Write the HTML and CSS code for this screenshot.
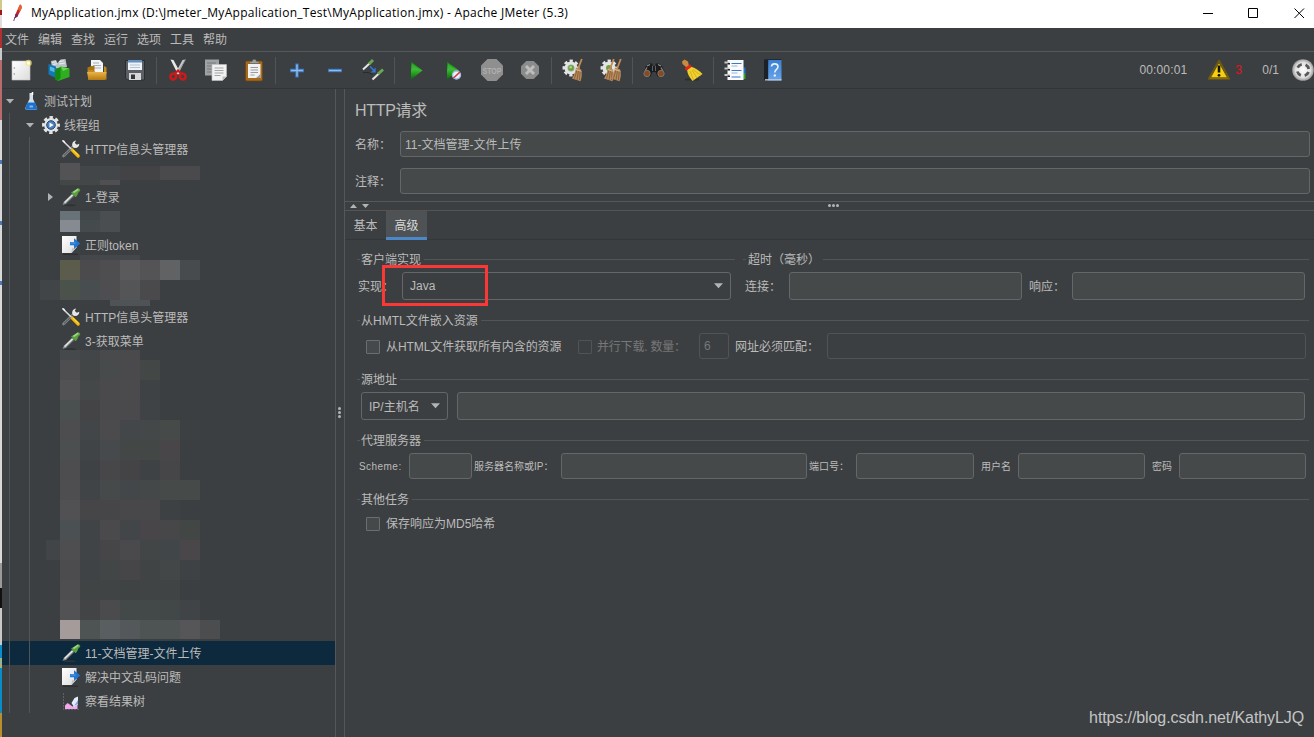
FILE: index.html
```html
<!DOCTYPE html>
<html lang="zh-CN">
<head>
    <meta charset="UTF-8">
    <meta name="viewport" content="width=device-width, initial-scale=1.0">
    <title>MyApplication.jmx - Apache JMeter (5.3)</title>
    <link rel="stylesheet" href="styles.css">
</head>
<body>
    <!-- Shared icons -->
    <svg width="0" height="0" class="defs">
        <defs>
            <linearGradient id="green" x1="0" y1="0" x2="0" y2="1"><stop offset="0" stop-color="#0b7a10"/><stop offset=".5" stop-color="#35b52c"/><stop offset="1" stop-color="#056a08"/></linearGradient>
            <linearGradient id="gold" x1="0" y1="0" x2="0" y2="1"><stop offset="0" stop-color="#e9b548"/><stop offset="1" stop-color="#b47a10"/></linearGradient>
            <linearGradient id="paper" x1="0" y1="0" x2="1" y2="1"><stop offset="0" stop-color="#ffffff"/><stop offset="1" stop-color="#dcdcdc"/></linearGradient>
            <linearGradient id="book" x1="0" y1="0" x2="0" y2="1"><stop offset="0" stop-color="#3a7fd0"/><stop offset="1" stop-color="#69a6ea"/></linearGradient>
            <radialGradient id="ball"><stop offset="0" stop-color="#ffffff"/><stop offset=".7" stop-color="#e0e0e0"/><stop offset="1" stop-color="#9a9a9a"/></radialGradient>
        </defs>
        <symbol id="dropper" viewBox="0 0 20 20">
            <ellipse cx="9" cy="18.3" rx="6" ry="1" fill="#2f3234"/>
            <path d="M1.5 17.8 3 14.5 11 6.8l2.3 2.3-8.2 7.8z" fill="#8d9194"/>
            <path d="M3.6 15.6 11.6 7.9" stroke="#f4f4f4" stroke-width="1.3"/>
            <path d="M5.4 16.6 13 9.3" stroke="#4d5052" stroke-width=".8"/>
            <path d="M10 5.6l4.6 4.7 1.4-1.6 1.4-3.2 1.8-1.8c.4-1.2-1.3-2.8-2.6-2.3L13.4 3.5z" fill="#5a9e42"/>
            <path d="M12.5 5.5 17.3 2.1" stroke="#9fd885" stroke-width="1.7"/>
        </symbol>
        <symbol id="tools" viewBox="0 0 20 20">
            <path d="M2.500 17 12 7.800" stroke="#85888a" stroke-width="2.600" stroke-linecap="round"/>
            <path d="M2.800 16.700 12 7.800" stroke="#4a4d4f" stroke-width="1"/>
            <path d="M11.500 7.500c-1-3 .5-5.500 3.600-6l-1.300 2.600 2 1.700 2.500-1c.2 3-2.600 4.800-5.200 4z" fill="#e6e7e7"/>
            <path d="M1.500 1.500 10.500 10.300" stroke="#dcdcdc" stroke-width="1.500"/>
            <path d="M1 1.200l2.200.4 1.400 2.600-1-.2z" fill="#fff"/>
            <path d="M11.500 11.300 17.200 17" stroke="#f2b705" stroke-width="3.200" stroke-linecap="round"/>
            <path d="M11.800 11 17.500 16.500" stroke="#ffe160" stroke-width="1"/>
        </symbol>
        <symbol id="post" viewBox="0 0 20 20">
            <path d="M2 19.200h15" stroke="#2c2e30" stroke-width="1.400"/>
            <path d="M1 1h14.500v11.500L10.500 18H1z" fill="url(#paper)"/>
            <path d="M15.500 12.500 10.500 18l.4-4.500z" fill="#bfc1c3"/>
            <path d="M9 7h4V3.200l6.200 5.300-6.200 5.400v-3.700H9z" fill="#2275d2"/>
            <path d="M9.500 8h5" stroke="#5fa6ee"/>
        </symbol>
        <symbol id="gear" viewBox="0 0 24 24">
            <circle cx="12" cy="12" r="8.700" fill="#e4e4e4"/>
            <circle cx="12" cy="12" r="9.500" fill="none" stroke="#e4e4e4" stroke-width="3.600" stroke-dasharray="4.300 3.160" stroke-dashoffset="2.150"/>
        </symbol>
        <symbol id="sweeper" viewBox="0 0 12 24">
            <path d="M10.800 1 7 11" stroke="#c58a52" stroke-width="1.800"/>
            <path d="M5 9.500l5.200 2c1 4 .8 8-.7 11.700L1 20.500C3.500 17 4.300 13 5 9.500z" fill="#b98a5d"/>
            <path d="M6 12 3.500 20.500M7.500 12.500 6 22M9.200 12.500 8.500 22" stroke="#7e5832" stroke-width=".8"/>
            <path d="M4.800 11.500l5.500 1.800" stroke="#e3bd8d" stroke-width="1"/>
        </symbol>
    </svg>

    <div class="desktop-edge"></div>

    <div class="window">
        <header class="title-bar">
            <svg class="app-icon" width="10" height="18" viewBox="0 0 10 18"><path d="M7 .5c1.500.5 2 2 1.500 4L4.500 12.500 1.500 14.500 2.500 10z" fill="#c8202f"/><path d="M7 .5c1.500.5 2 2 1.500 4L7 7.500 4.800 5z" fill="#e8622a"/><path d="M2.500 10 1.500 14.500 4.500 12.500 5 10z" fill="#7d2160"/><path d="M2 13 .7 17" stroke="#6b4a6e"/></svg>
            <span class="caption">MyApplication.jmx (D:\Jmeter_MyAppalication_Test\MyApplication.jmx) - Apache JMeter (5.3)</span>
            <svg class="controls" width="104" height="12" viewBox="0 0 104 12" fill="none" stroke="#000"><path d="M0 6.500h10M45.500 1.500h9v9h-9zM91.500 1.500l9.500 9.500M101 1.500 91.500 11"/></svg>
        </header>

        <nav class="menu">
            <span>文件</span><span>编辑</span><span>查找</span><span>运行</span><span>选项</span><span>工具</span><span>帮助</span>
        </nav>

        <div class="toolbar">
            <!-- new -->
            <div class="tool"><svg viewBox="0 0 24 24"><path d="M3 3h18v19H3z" fill="url(#paper)" stroke="#c4c4c4" stroke-width=".6"/><circle cx="5.300" cy="10" r=".7" fill="#888"/><circle cx="5.300" cy="16" r=".7" fill="#888"/><circle cx="19.500" cy="5" r="3.300" fill="#f4e77a" opacity=".7"/><circle cx="19.500" cy="5" r="1.700" fill="#fffef0"/></svg></div>
            <!-- templates -->
            <div class="tool"><svg viewBox="0 0 24 24"><path d="M4 3l5-1 1.500 3 3-3.500 5-.5 1.500 8-15 2z" fill="#b9c3c8"/><path d="M5 4.500l4-.8M12 3.700l5-1M6 6.500l4-.8M12 6l6-1" stroke="#e9eef0"/><path d="M1.500 6 9 8.500V20l-7.500-3.500z" fill="#1378b8"/><path d="M3 8.500l4.500 1.700v4L3 12.500z" fill="#58b6e6"/><path d="M8 12l6-3.500 8.500 2v8.500L11 23l-3-2z" fill="#2fae22"/><path d="M8 12l5.500-3v11L11 23l-3-2z" fill="#148a10"/><path d="M14 9l8 1.500-6 2.500z" fill="#6ad84a"/></svg></div>
            <!-- open -->
            <div class="tool"><svg viewBox="0 0 24 24"><path d="M6 2h9l3 3v9H6z" fill="#f3f4f5"/><path d="M8 5h6M8 7.500h8M8 10h8" stroke="#a9adb0"/><path d="M2.500 9.500l4-1.500h3v7H2.500z" fill="#a87416"/><path d="M3 12h5l2 2h9V8l2.500 1.500V21.500H3z" fill="#c38a1c"/><path d="M2 14h19.500l-1.500 8H3.500z" fill="url(#gold)"/></svg></div>
            <!-- save -->
            <div class="tool"><svg viewBox="0 0 24 24"><path d="M2.500 2.500h19v19.500H4.500l-2-2z" fill="#5c6066" stroke="#2b2d30"/><path d="M5 2.500h14v9.500H5z" fill="#eef3f8"/><path d="M5 2.500h14v2H5z" fill="#5c90cc"/><path d="M7 7h10M7 9.500h10" stroke="#b7c3cf"/><path d="M6 15h12v7H6z" fill="#d6d7d9"/><path d="M8 16.500h4v4.500H8z" fill="#33363a"/></svg></div>
            <div class="sep"></div>
            <!-- cut -->
            <div class="tool"><svg viewBox="0 0 24 24"><path d="M4.500 1.500 7.500 2l7 13-2.500 1.500z" fill="#e9e9e9"/><path d="M19.500 1.500 16.500 2l-7 13 2.500 1.500z" fill="#c7c9ca"/><path d="M19.500 1.500 12 14" stroke="#8b8e90" stroke-width=".8"/><path d="M9 15.500l3-3 3 3" fill="none" stroke="#d01818" stroke-width="2"/><g fill="none" stroke="#d01818" stroke-width="2.600"><ellipse cx="7.300" cy="18.500" rx="2.800" ry="3" transform="rotate(30 7.300 18.500)"/><ellipse cx="16.700" cy="18.500" rx="2.800" ry="3" transform="rotate(-30 16.700 18.500)"/></g></svg></div>
            <!-- copy -->
            <div class="tool"><svg viewBox="0 0 24 24"><path d="M1 1.500h14v16H1z" fill="#9fa2a4"/><path d="M3 5h9M3 8h6M3 11h6M3 14h6" stroke="#77797b"/><path d="M8 6.500h14.500v12l-4 4H8z" fill="#f2f2f2" stroke="#c2c2c2" stroke-width=".6"/><path d="M10.500 10h9M10.500 12.500h9M10.500 15h9M10.500 17.500h6" stroke="#a2a5a7"/><path d="M22.500 18.500l-4 4v-4z" fill="#bdbdbd"/></svg></div>
            <!-- paste -->
            <div class="tool"><svg viewBox="0 0 24 24"><rect x="3.500" y="3" width="17" height="20" rx="1.500" fill="#a9691a" stroke="#6e430e" stroke-width=".7"/><path d="M6 6h12.500v14H6z" fill="#f2f2f2"/><path d="M8.500 9.500h7.500M8.500 12h7.500M8.500 14.500h7.500M8.500 17h4" stroke="#999c9e"/><path d="M18.500 16v4H14z" fill="#9b9b9b"/><path d="M7.500 5.500V3.500h2.500l1-2h2.500l1 2H17v2z" fill="#9da19a" stroke="#5b5e59" stroke-width=".6"/></svg></div>
            <div class="sep"></div>
            <!-- add / remove / toggle -->
            <div class="tool"><svg viewBox="0 0 24 24"><path d="M12 5.500v14M5 12.500h14" stroke="#3b77bd" stroke-width="3.400"/><path d="M12 6.500v12M6 12.500h12" stroke="#8dbdf0" stroke-width="1.400"/></svg></div>
            <div class="tool"><svg viewBox="0 0 24 24"><path d="M5 12.500h14" stroke="#3b77bd" stroke-width="3.400"/><path d="M6 12.500h12" stroke="#8dbdf0" stroke-width="1.400"/></svg></div>
            <div class="tool"><svg viewBox="0 0 24 24"><path d="M2 11.500 8.500 5.500" stroke="#e5e5e5" stroke-width="2"/><path d="M8 6 12 2" stroke="#69a851" stroke-width="3"/><path d="M11.500 21.500 18 15.500" stroke="#e5e5e5" stroke-width="2"/><path d="M17 16 22 11.500" stroke="#69a851" stroke-width="3"/><path d="M2 14.500h5l5 2" stroke="#202224" stroke-width=".7" fill="none"/><path d="M9 8.500l4.500 4.500" stroke="#3279d6" stroke-width="1.600"/><path d="M14.700 9.500v5h-5z" fill="#3279d6"/></svg></div>
            <div class="sep"></div>
            <!-- start / start no pauses -->
            <div class="tool"><svg viewBox="0 0 24 24"><path d="M7 3.500 18.500 12.500 7 21.500z" fill="url(#green)"/><path d="M8 5.500 16 12H8z" fill="#4cc046" opacity=".55"/></svg></div>
            <div class="tool"><svg viewBox="0 0 24 24"><path d="M5 3.500 17 12.500 5 21.500z" fill="url(#green)"/><path d="M6 5.500 14 12H6z" fill="#4cc046" opacity=".55"/><circle cx="14.500" cy="17" r="4" fill="#e9f1fb" stroke="#9fbfe8" stroke-width="1.400"/><path d="M11.500 20 18 14" stroke="#d43c3c" stroke-width="1.700"/></svg></div>
            <!-- stop / shutdown -->
            <div class="tool"><svg viewBox="0 0 24 24"><path d="M7.500 1h9L23 7.500v9L16.500 23h-9L1 16.500v-9z" fill="#8f8f8f"/><text x="12" y="15.500" text-anchor="middle" class="stop-text" textLength="19" lengthAdjust="spacingAndGlyphs">STOP</text></svg></div>
            <div class="tool"><svg viewBox="0 0 24 24"><path d="M8.300 3h7.400l5.300 5.300v7.400L15.700 21H8.300L3 15.700V8.300z" fill="#8b8b8b"/><path d="M8 8l8 8M16 8l-8 8" stroke="#bdbdbd" stroke-width="3"/></svg></div>
            <div class="sep"></div>
            <!-- clear / clear all -->
            <div class="tool"><svg viewBox="0 0 24 24"><use href="#gear" x="1" y="1" width="18" height="18"/><circle cx="10" cy="10" r="3.500" fill="#9fa5a0"/><circle cx="10" cy="10" r="2.700" fill="#63a53a"/><circle cx="9.700" cy="9.300" r="1.300" fill="#a5dd6c"/><use href="#sweeper" x="10" y="0" width="12" height="24"/></svg></div>
            <div class="tool"><svg viewBox="0 0 24 24"><use href="#gear" x="1" y="1" width="18" height="18"/><circle cx="10" cy="10" r="3" fill="#63a53a"/><use href="#sweeper" x="4" y="0" width="12" height="24"/><use href="#sweeper" x="11" y="0" width="12" height="24"/></svg></div>
            <div class="sep"></div>
            <!-- search / reset search -->
            <div class="tool"><svg viewBox="0 0 24 24"><path d="M4 8l3-2.500h3.500V8h3V5.500H17L20 8l2.500 6-2 4-5 .5-2-4.500h-3l-2 4.500-5-.5-2-4z" fill="#1b1c1d"/><path d="M5 8l3-1.500M19 8l-3-1.500M3 13l2-3.500M21 13l-2-3.500" stroke="#8d9092" stroke-width="1.200"/><path d="M10.500 8v5M13.500 8v5" stroke="#5f6264"/><circle cx="5" cy="15.500" r="3.200" fill="#8a4a1d" stroke="#777a7b" stroke-width=".9"/><circle cx="19" cy="15.500" r="3.200" fill="#8a4a1d" stroke="#777a7b" stroke-width=".9"/></svg></div>
            <div class="tool"><svg viewBox="0 0 24 24"><path d="M5 21.500h14" stroke="#2d2f31" stroke-width="2"/><path d="M2 3.500 4.500 1.500 8 3.500 9 8 6.500 9.500 2.500 6z" fill="#c98a3e"/><path d="M10.500 8.500c5 1.500 8.500 4 12 7.500L12.500 23C9.500 19.500 7.500 16 7 11.500z" fill="#f0d02c"/><path d="M10 13l3.500 9M12 12l5 8M13 11.500l8 6" stroke="#cfa91a" stroke-width=".8"/><path d="M5.500 11.500 11 7.500" stroke="#d8271c" stroke-width="3"/></svg></div>
            <div class="sep"></div>
            <!-- function helper / help -->
            <div class="tool"><svg viewBox="0 0 24 24"><path d="M19 9.500h3.500V16H19z" fill="#2a6fd0"/><path d="M19 15.500h3.500V21H19z" fill="#2fa92b"/><path d="M4.500 2h16v20h-16z" fill="#fafafa"/><path d="M8.500 5.500h10M8.500 12.500h10M8.500 19h9" stroke="#3c78c8" stroke-width="1.100"/><path d="M8.500 8h6M8.500 15h6" stroke="#92b6e4"/><path d="M1.500 4.500h5M1.500 10.500h5M1.500 17h5" stroke="#c9c9c9" stroke-width="1.800"/><path d="M4.500 5.800h2.500M4.500 11.800h2.500M4.500 18.300h2.500" stroke="#222" stroke-width="1.400"/></svg></div>
            <div class="tool"><svg viewBox="0 0 24 24"><path d="M3.500 2h17v20.500h-17z" fill="url(#book)"/><path d="M3 2h4.200v20.500H3z" fill="#1c2127"/><path d="M3.500 1.500h17" stroke="#222a33"/><path d="M4 21.800h16.500" stroke="#b9cbe0" stroke-width="1.300"/><path d="M10.500 8.500c.2-3.500 6.500-3.500 6.500.3 0 2.500-3.200 2.600-3.200 5.700" fill="none" stroke="#e6f0fb" stroke-width="1.600"/><circle cx="13.800" cy="17.500" r="1.200" fill="#e6f0fb"/></svg></div>

            <div class="status">
                <span class="elapsed">00:00:01</span>
                <svg width="24" height="22" viewBox="0 0 24 22"><path d="M12 1.500 22.500 20H1.500z" fill="#f7cf10" stroke="#6d5a14" stroke-width="1.600" stroke-linejoin="round"/><path d="M12 3.500 20.500 18.700H3.500z" fill="none" stroke="#3a320c" stroke-width=".7"/><path d="M12 6.500v7" stroke="#111" stroke-width="2.600"/><circle cx="12" cy="16.300" r="1.400" fill="#111"/></svg>
                <span class="errors">3</span>
                <span class="threads">0/1</span>
                <svg class="run-state" width="22" height="22" viewBox="0 0 22 22"><circle cx="11" cy="11" r="10.800" fill="url(#ball)"/><circle cx="11" cy="11" r="5.800" fill="none" stroke="#55585a" stroke-width="2.800" stroke-dasharray="5.100 4" stroke-dashoffset="-2"/></svg>
            </div>
        </div>

        <main class="workspace">
            <aside class="tree">
                <div class="guide guide-root"></div>
                <div class="guide guide-group"></div>
                <div class="node level-0"><svg class="twisty" viewBox="0 0 10 10"><path d="M1 3h8L5 7.500z"/></svg><svg class="icon" viewBox="0 0 20 20"><path d="M8.500 2h3.500v6l4 8.500c.6 1.500-.3 2.500-1.500 2.500h-8.500C4.800 19 3.900 18 4.500 16.500L8.500 8z" fill="#d2e0ea"/><path d="M6.500 11.500h7.500l2 5c.5 1.400 0 2.300-1.200 2.300H5.900c-1.200 0-1.700-.9-1.200-2.300z" fill="#1d71cc"/><path d="M8.500 15.500h3.500" stroke="#7db9f2" stroke-width="2"/><path d="M11.500 1v3" stroke="#fff" stroke-width="1.500"/></svg><span>测试计划</span></div>
                <div class="node level-1"><svg class="twisty" viewBox="0 0 10 10"><path d="M1 3h8L5 7.500z"/></svg><svg class="icon" viewBox="0 0 20 20"><use href="#gear" x=".5" y=".5" width="19" height="19"/><circle cx="10" cy="10" r="4.300" fill="#4a80c4" stroke="#24466f"/><path d="M8.500 7.500 12.600 10l-4.100 2.500z" fill="#fff"/></svg><span>线程组</span></div>
                <div class="node level-2"><i class="twisty"></i><svg class="icon"><use href="#tools"/></svg><span>HTTP信息头管理器</span></div>
                <div class="node"></div>
                <div class="node level-2"><svg class="twisty" viewBox="0 0 10 10"><path d="M3 1v8l5-4z"/></svg><svg class="icon"><use href="#dropper"/></svg><span>1-登录</span></div>
                <div class="node"></div>
                <div class="node level-2"><i class="twisty"></i><svg class="icon"><use href="#post"/></svg><span>正则token</span></div>
                <div class="node hidden-2"></div>
                <div class="node level-2"><i class="twisty"></i><svg class="icon"><use href="#tools"/></svg><span>HTTP信息头管理器</span></div>
                <div class="node level-2"><i class="twisty"></i><svg class="icon"><use href="#dropper"/></svg><span>3-获取菜单</span></div>
                <div class="node hidden-12"></div>
                <div class="node level-2 selected"><i class="twisty"></i><svg class="icon"><use href="#dropper"/></svg><span>11-文档管理-文件上传</span></div>
                <div class="node level-2"><i class="twisty"></i><svg class="icon"><use href="#post"/></svg><span>解决中文乱码问题</span></div>
                <div class="node level-2"><i class="twisty"></i><svg class="icon" viewBox="0 0 20 20"><path d="M2.500 2v16.500H18" fill="none" stroke="#5f6365" stroke-dasharray="2 1"/><path d="M4 18v-3.500l2.500-2.500 3 2 2 1.500 5-2v4.500z" fill="#f2a8ea"/><path d="M10.500 12l3-5 3.500-1.500v8L13 16z" fill="#e6eefb"/><path d="M13 15l4-2v-4z" fill="#7da3df"/></svg><span>察看结果树</span></div>
                <svg class="mosaic" id="mosaic" width="240" height="648"></svg>
            </aside>

            <div class="splitter"><i></i><i></i><i></i></div>

            <section class="editor">
                <h1>HTTP请求</h1>
                <div class="prop"><label>名称：</label><div class="field"><span>11-文档管理-文件上传</span></div></div>
                <div class="prop"><label>注释：</label><div class="field"></div></div>

                <div class="h-splitter">
                    <svg class="collapse" width="22" height="8" viewBox="0 0 22 8"><path d="M1 6h7L4.500 2zM13 2h7l-3.500 4z" fill="#b4b4b4"/></svg>
                    <div class="dots"><i></i><i></i><i></i></div>
                </div>

                <div class="tabs">
                    <div class="tab">基本</div>
                    <div class="tab active">高级</div>
                </div>

                <div class="settings">
                    <div class="pair">
                        <div class="group client">
                            <div class="group-title">客户端实现</div>
                            <div class="row">
                                <label>实现：</label>
                                <div class="combo">Java<svg viewBox="0 0 10 6"><path d="M0 0h10L5 5.500z"/></svg></div>
                                <div class="highlight"></div>
                            </div>
                        </div>
                        <div class="group timeouts">
                            <div class="group-title">超时（毫秒）</div>
                            <div class="row">
                                <label>连接：</label>
                                <div class="field"></div>
                                <label class="response">响应：</label>
                                <div class="field"></div>
                            </div>
                        </div>
                    </div>

                    <div class="group embedded">
                        <div class="group-title">从HMTL文件嵌入资源</div>
                        <div class="row">
                            <span class="check"></span><label class="retrieve">从HTML文件获取所有内含的资源</label>
                            <span class="check disabled"></span><label class="parallel">并行下载. 数量：</label>
                            <div class="field pool disabled">6</div>
                            <label class="match">网址必须匹配：</label>
                            <div class="field disabled"></div>
                        </div>
                    </div>

                    <div class="group source">
                        <div class="group-title">源地址</div>
                        <div class="row">
                            <div class="combo"><span>IP/主机名</span><svg viewBox="0 0 10 6"><path d="M0 0h10L5 5.500z"/></svg></div>
                            <div class="field"></div>
                        </div>
                    </div>

                    <div class="group proxy">
                        <div class="group-title">代理服务器</div>
                        <div class="row">
                            <label class="scheme">Scheme:</label><div class="field w-scheme"></div>
                            <label class="host">服务器名称或IP：</label><div class="field w-host"></div>
                            <label class="port">端口号：</label><div class="field w-port"></div>
                            <label class="user">用户名</label><div class="field w-user"></div>
                            <label class="pass">密码</label><div class="field w-user"></div>
                        </div>
                    </div>

                    <div class="group other">
                        <div class="group-title">其他任务</div>
                        <div class="row">
                            <span class="check"></span><label class="md5">保存响应为MD5哈希</label>
                        </div>
                    </div>
                </div>
            </section>
        </main>
    </div>

    <div class="watermark">https://blog.csdn.net/KathyLJQ</div>
    <script src="script.js"></script>
</body>
</html>
```

FILE: styles.css
```css
* {
    margin: 0;
    padding: 0;
    box-sizing: border-box;
}

body {
    width: 1314px;
    height: 737px;
    display: flex;
    overflow: hidden;
    position: relative;
    background: #3c3f41;
    color: #bbbbbb;
    font-family: "Liberation Sans", "Noto Sans CJK SC", sans-serif;
    font-size: 12px;
    line-height: 16px;
    white-space: nowrap;
}
.defs {
    position: absolute;
}
/* Sliver of whatever is behind the window */
.desktop-edge {
    width: 2px;
    background: linear-gradient(#cfc98a 0 10px, #a01818 10px 15px, #dedede 15px 28px, #b03030 28px 48px, #c9c9c9 48px 60px, #b86a6c 60px 120px, #d8d8d8 120px 160px, #4a78b8 160px 164px, #d8d8d8 164px 221px, #4a78b8 221px 225px, #d8d8d8 225px 281px, #4a78b8 281px 285px, #d8d8d8 285px 563px, #9a9a9a 563px 588px, #111 588px 608px, #c8c8c8 608px 645px, #0a8cc8 645px 658px, #9db48a 658px 668px, #0a8cc8 668px 713px, #b88f2a 713px);
}
.window {
    flex: 1;
    display: flex;
    flex-direction: column;
}

/* Title bar and menu */
.title-bar {
    height: 28px;
    display: flex;
    align-items: center;
    background: #fff;
    color: #000;
    padding: 0 7px 3px 11px;
}
.app-icon {
    margin-right: 8px;
}
.caption {
    font-family: "Open Sans", "Noto Sans", sans-serif;
    font-size: 12px;
    letter-spacing: 0.28px;
}
.controls {
    margin-left: auto;
}
.menu {
    height: 24px;
    display: flex;
    gap: 9px;
    padding: 4px 0 0 3px;
    border-bottom: 1px solid #555759;
}

/* Toolbar */
.toolbar {
    height: 37px;
    display: flex;
    align-items: center;
    border-bottom: 1px solid #323537;
}
.tool {
    width: 38px;
    height: 36px;
    display: flex;
    align-items: center;
    justify-content: center;
}
.tool svg {
    width: 24px;
    height: 24px;
}
.stop-text {
    font-size: 9px;
    font-weight: bold;
    fill: #b0b0b0;
}
.sep {
    width: 1px;
    height: 27px;
    margin: 0 2px;
    background: #515355;
}
.status {
    flex: 1;
    display: flex;
    align-items: center;
    justify-content: flex-end;
}
.elapsed {
    margin-right: 20px;
    letter-spacing: 0.15px;
}
.errors {
    width: 7px;
    margin: 0 20px 0 4px;
    color: #e0141c;
}
.threads {
    margin-right: 13px;
}

/* Tree */
.workspace {
    flex: 1;
    display: grid;
    grid-template-columns: 333px 10px 1fr;
}
.tree {
    position: relative;
}
.node {
    height: 24px;
    display: flex;
    align-items: center;
}
.node span {
    padding-top: 2px;
}
.level-0 {
    padding-left: 3px;
}
.level-1 {
    padding-left: 23px;
}
.level-2 {
    padding-left: 43px;
}
.level-2 span {
    padding-left: 1px;
}
.twisty {
    width: 10px;
    height: 10px;
    margin-right: 6px;
    fill: #b0b2b3;
}
.icon {
    width: 20px;
    height: 20px;
    margin-right: 3px;
}
.hidden-2 {
    height: 48px;
}
.hidden-12 {
    height: 288px;
}
.selected {
    background: #0d293e;
}
.guide {
    position: absolute;
    width: 1px;
    bottom: 24px;
    background: #515557;
}
.guide-root {
    left: 7px;
    top: 24px;
}
.guide-group {
    left: 27px;
    top: 48px;
}
.mosaic {
    position: absolute;
    left: -2px;
    top: 0;
}

/* Splitters */
.splitter {
    display: flex;
    flex-direction: column;
    align-items: center;
    justify-content: center;
    gap: 1px;
    padding: 0 1px 2px 0;
    border-left: 1px solid #555759;
    border-right: 1px solid #555759;
}
.splitter i,
.dots i {
    width: 3px;
    height: 3px;
    border-radius: 50%;
    background: #b4b4b4;
}
.h-splitter {
    height: 10px;
    margin-top: 7px;
    position: relative;
    display: flex;
    align-items: center;
    border-top: 1px solid #555759;
    border-bottom: 1px solid #555452;
}
.collapse {
    margin-left: 4px;
}
.dots {
    display: flex;
    gap: 1px;
    margin: -1px 0 0 457px;
}

/* Editor */
.editor {
    display: flex;
    flex-direction: column;
}
h1 {
    height: 42px;
    padding: 12px 0 0 10px;
    font-size: 16px;
    font-weight: normal;
    line-height: 20px;
    letter-spacing: -0.3px;
}
.prop {
    display: flex;
    align-items: center;
    padding: 0 4px 0 10px;
}
.prop + .prop {
    margin-top: 11px;
}
.prop label {
    width: 45px;
    padding-top: 2px;
}
.prop .field span,
.source .combo span {
    padding-top: 2px;
}
.field,
.combo {
    height: 26px;
    display: flex;
    align-items: center;
    flex: 1;
    min-width: 0;
    border: 1px solid #646667;
    border-radius: 3px;
    background: #45494a;
    padding: 0 4px;
}
.combo {
    height: 28px;
    justify-content: space-between;
    background: none;
    padding: 0 7px;
}
.combo svg {
    width: 9px;
    height: 6px;
    fill: #b4b4b4;
}
.tabs {
    height: 29px;
    display: flex;
    border-bottom: 1px solid #343638;
}
.tab {
    width: 41px;
    height: 29px;
    padding-top: 7px;
    text-align: center;
}
.tab.active {
    background: #4e5254;
    border-bottom: 3px solid #4a88c7;
    color: #d8d8d8;
}

/* Titled groups */
.settings {
    padding: 9px 5px 0 12px;
}
.group {
    margin-bottom: 10px;
}
.group-title {
    height: 21px;
    display: flex;
    align-items: center;
    margin-bottom: 2px;
}
.group-title::before,
.group-title::after {
    content: "";
    height: 1px;
    background: #515557;
}
.group-title::before {
    width: 3px;
    margin-right: 1px;
}
.group-title::after {
    flex: 1;
    margin-left: 3px;
}
.timeouts .group-title::before {
    margin-right: 2px;
}
.row {
    display: flex;
    align-items: center;
    position: relative;
}
.pair {
    display: flex;
    gap: 8px;
}
.client {
    width: 378px;
}
.client .row {
    padding: 0 4px 0 1px;
}
.client label {
    width: 44px;
    padding-top: 2px;
}
.highlight {
    position: absolute;
    left: 25px;
    top: -7px;
    width: 106px;
    height: 41px;
    border: 3px solid #fb3835;
}
.timeouts {
    flex: 1;
}
.timeouts .row {
    padding: 0 4px 0 2px;
}
.timeouts label {
    width: 44px;
    padding-top: 2px;
}
.timeouts .response {
    width: 43px;
    margin-left: 7px;
}
.timeouts .field {
    height: 28px;
}
.check {
    width: 14px;
    height: 14px;
    margin: 2px 6px 0 0;
    border: 1px solid #6b6d6e;
    border-radius: 1px;
    background: #45494a;
}
.disabled {
    color: #777777;
    background: none;
    border-color: #515456;
}
.check.disabled {
    margin-right: 5px;
}
.embedded .row {
    padding: 0 3px 0 9px;
}
.embedded label {
    padding-top: 2px;
}
.retrieve {
    width: 192px;
    letter-spacing: -0.08px;
}
.parallel {
    width: 102px;
    color: #777777;
    letter-spacing: -0.2px;
}
.pool {
    flex: none;
    width: 30px;
}
.match {
    width: 92px;
    margin-left: 6px;
}
.source .row {
    padding: 0 4px;
}
.source .combo {
    flex: none;
    width: 87px;
    margin-right: 9px;
}
.source .field {
    height: 28px;
}
.proxy .row {
    padding-left: 2px;
    font-size: 10px;
}
.proxy .field {
    flex: none;
}
.proxy label {
    padding-top: 1px;
}
.scheme {
    width: 50px;
    letter-spacing: 0.45px;
}
.host {
    width: 87px;
    margin-left: 2px;
}
.port {
    width: 47px;
    margin-left: 2px;
}
.user {
    width: 37px;
    margin-left: 7px;
}
.pass {
    width: 27px;
    margin-left: 7px;
}
.w-scheme {
    width: 63px;
}
.w-host {
    width: 246px;
}
.w-port {
    width: 118px;
}
.w-user {
    width: 127px;
}
.other .row {
    height: 24px;
    padding-left: 9px;
}
.other .check {
    margin-top: 0;
}

.watermark {
    position: absolute;
    right: 10px;
    bottom: 9px;
    font-size: 16px;
    line-height: 20px;
    letter-spacing: -0.1px;
    color: #c4c5c6;
}
```

FILE: script.js
```js
// Pixelated cover for the private test names.
// Each band: [x, y, height, [cell colours]], cells are 20px wide.
const TREE_TOP = 89;
const bands = [
    [60, 163, 17, ['#535355']],
    [80, 166, 14, ['#424648', '#424648', '#434345', '#434345', '#4a4a4c', '#4a4a4c']],
    [60, 180, 5, ['#434846', '#434846', '#505052']],
    [60, 211, 9, ['#697278', '#424749', '#4a4e50']],
    [60, 220, 12, ['#858b90', '#454a4c', '#4a4e50']],
    [80, 255, 5, ['#45484a', '#45484a', '#45484a']],
    [60, 260, 20, ['#5c5c4c', '#4b4b4d', '#4e4e50', '#5a5a5c', '#545456', '#616264', '#474b4d']],
    [40, 280, 20, ['#414547', '#4b524c', '#484d50', '#4e4e50', '#545557', '#4a4a4c']],
    [110, 300, 6, ['#505355', '#505355']],
    [60, 350, 10, ['#45494b', '#424648', '#484a4c', '#4a4a4c']],
    [60, 360, 20, ['#4e4e50', '#424647', '#474b4c', '#4a4a4c', '#434746']],
    [60, 380, 20, ['#525254', '#444848', '#4a4a4c', '#4b4b4d', '#3e4244']],
    [60, 400, 20, ['#4a4f50', '#444446', '#4a4a4c', '#4a4a4c', '#3f4345']],
    [60, 420, 20, ['#4d4d4f', '#424648', '#4b4b4d', '#434749', '#444848', '#464a49', '#3d4042']],
    [60, 440, 20, ['#4b4f4f', '#404446', '#464a4c', '#434746', '#434746', '#484648']],
    [60, 460, 20, ['#4d4d4f', '#3e4244', '#474749', '#444446', '#3e4245', '#464547']],
    [60, 480, 20, ['#4e4e50', '#414446', '#464a4b', '#434749', '#444848', '#464a49', '#464a49']],
    [60, 500, 20, ['#515153', '#464648', '#464648', '#48484a', '#48484a', '#3d4143']],
    [60, 520, 20, ['#4b5152', '#404447', '#4a4a4c', '#424649', '#484648', '#474648', '#424645']],
    [46, 540, 20, ['#414547']],
    [60, 540, 20, ['#4e4e50', '#404447', '#464648', '#4a4a4c', '#424646', '#414649', '#494749']],
    [60, 560, 20, ['#4c4c4e', '#3f4345', '#424646', '#464547', '#404445', '#434747', '#3e4244']],
    [60, 580, 20, ['#4e4e50', '#404445', '#404445', '#3f4344', '#404445', '#404445']],
    [60, 600, 20, ['#525254', '#434446', '#4b4b4d', '#434848', '#434848', '#424747', '#404446']],
    [60, 620, 19, ['#a59b9b', '#4e5354', '#595e60', '#55585a', '#4e5354', '#4e5354', '#565658', '#4c4d4f']]
];

const mosaic = document.getElementById('mosaic');
bands.forEach(([x, y, height, colours]) => {
    colours.forEach((colour, i) => {
        const rect = document.createElementNS('http://www.w3.org/2000/svg', 'rect');
        rect.setAttribute('x', x + i * 20);
        rect.setAttribute('y', y - TREE_TOP);
        rect.setAttribute('width', 20);
        rect.setAttribute('height', height);
        rect.setAttribute('fill', colour);
        mosaic.appendChild(rect);
    });
});
```
